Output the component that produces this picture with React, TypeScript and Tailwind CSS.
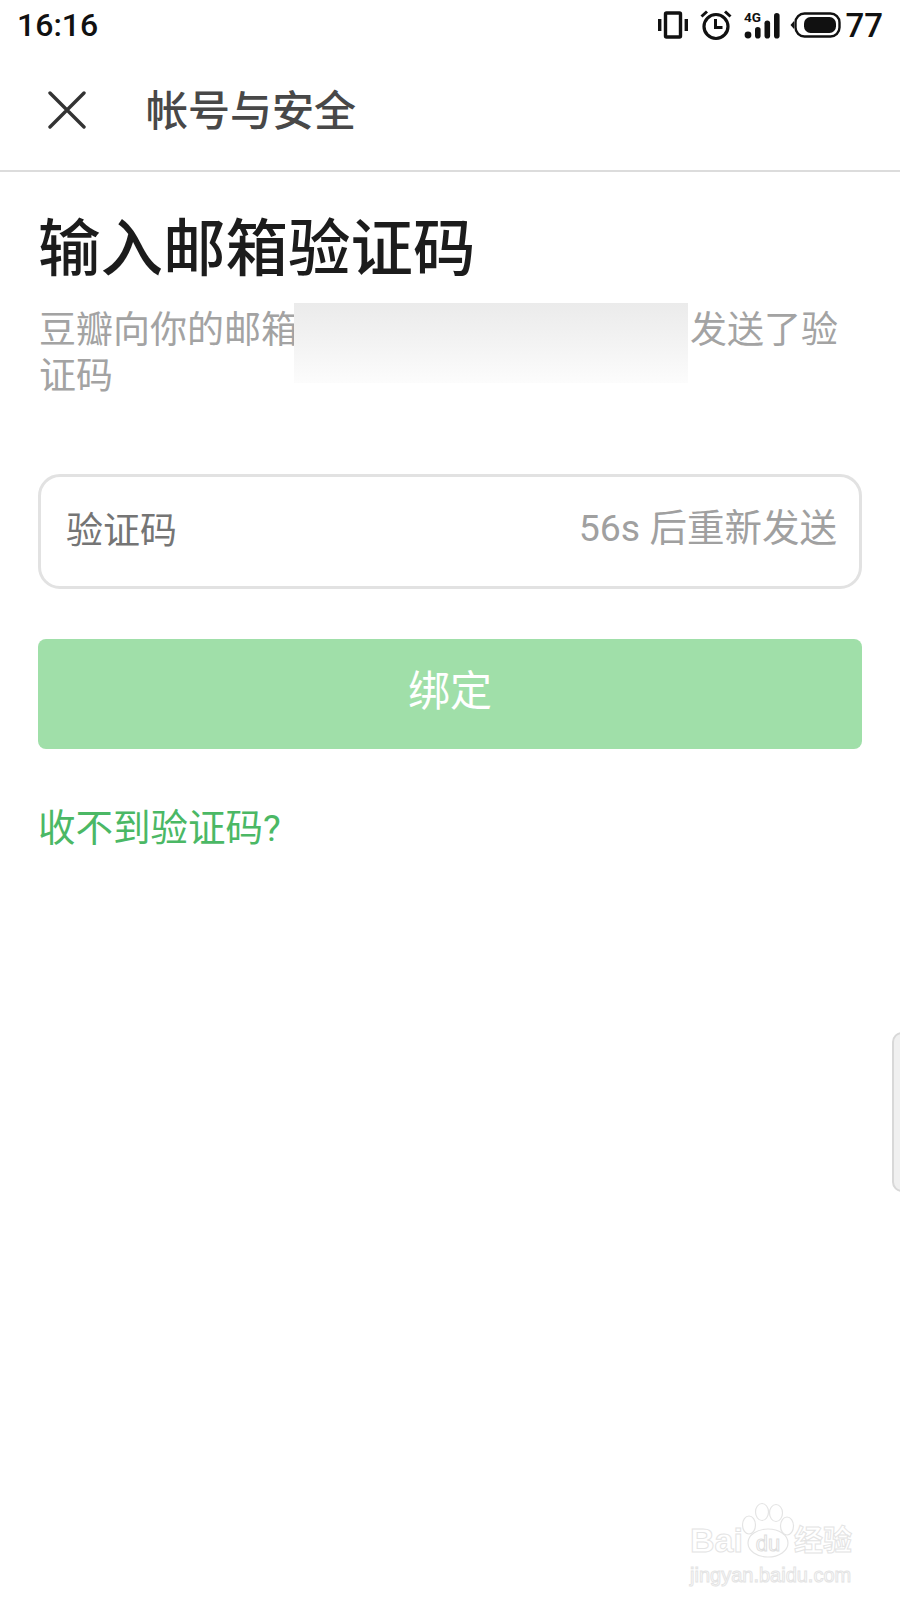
const cjk = "font-['Roboto','Noto_Sans_CJK_SC','Noto_Sans',sans-serif]";

function StatusIcons() {
  return (
    <div className="flex items-center">
      <svg width="32" height="30" viewBox="0 0 32 30" fill="none" className="text-[#111]">
        <rect x="8.5" y="3" width="15" height="24" stroke="currentColor" strokeWidth="3.4" rx="1" />
        <rect x="1" y="9" width="3.4" height="12" fill="currentColor" />
        <rect x="27.6" y="9" width="3.4" height="12" fill="currentColor" />
      </svg>
      <svg width="34" height="32" viewBox="0 0 34 32" fill="none" className="ml-[10px]">
        <circle cx="17" cy="17.5" r="12" stroke="#111" strokeWidth="3.2" />
        <path d="M16.5 10v8.5h7" stroke="#111" strokeWidth="3" />
        <path d="M2.5 7.5 8 2.5M31.5 7.5 26 2.5" stroke="#111" strokeWidth="3" />
      </svg>
      <svg width="38" height="30" viewBox="0 0 38 30" className="ml-[11px]">
        <text x="0" y="12" fontSize="13.5" fontWeight="700" fill="#111" fontFamily="Roboto, sans-serif">4G</text>
        <circle cx="4" cy="25" r="3.4" fill="#111" />
        <rect x="11" y="17" width="5.6" height="11.5" rx="2.8" fill="#111" />
        <rect x="20.5" y="10.5" width="5.6" height="18" rx="2.8" fill="#111" />
        <rect x="30" y="3" width="5.6" height="25.5" rx="2.8" fill="#111" />
      </svg>
      <svg width="52" height="26" viewBox="0 0 52 26" className="ml-[7px]" fill="none">
        <path d="M5 9 1.5 13 5 17Z" fill="#111" />
        <rect x="6.5" y="1.5" width="44" height="23" rx="9" stroke="#111" strokeWidth="2.4" />
        <rect x="15" y="5" width="32" height="16" rx="6.5" fill="#111" />
      </svg>
      <span className="ml-[4px] text-[33px] leading-none font-medium text-[#111] font-['Roboto',sans-serif]">77</span>
    </div>
  );
}

function Watermark() {
  const outline = "text-white [-webkit-text-stroke:1px_#e4e4e4]";
  return (
    <div className="absolute left-[690px] top-[1502px] flex w-[170px] flex-col select-none">
      <div className="flex items-end">
        <span className={`text-[34px] leading-[40px] font-bold font-['Liberation_Sans',sans-serif] ${outline}`}>Bai</span>
        <svg width="54" height="58" viewBox="0 0 54 58" fill="none" className="ml-[-2px]">
          <ellipse cx="27" cy="41" rx="20" ry="14" fill="white" stroke="#e4e4e4" strokeWidth="1.2" />
          <ellipse cx="8" cy="23" rx="6.5" ry="9" stroke="#e4e4e4" strokeWidth="1.2" />
          <ellipse cx="21" cy="10" rx="6.5" ry="8.5" stroke="#e4e4e4" strokeWidth="1.2" />
          <ellipse cx="35" cy="11" rx="6.5" ry="8.5" stroke="#e4e4e4" strokeWidth="1.2" />
          <ellipse cx="46" cy="24" rx="6.5" ry="9" stroke="#e4e4e4" strokeWidth="1.2" />
          <text x="27" y="49" textAnchor="middle" fontSize="22" fontFamily="Liberation Sans, sans-serif" fill="white" stroke="#dedede" strokeWidth="1">du</text>
        </svg>
        <span className={`ml-[-1px] text-[29px] leading-[38px] font-bold ${cjk} ${outline}`}>经验</span>
      </div>
      <span className={`mt-[3px] text-[20px] leading-[24px] font-['Liberation_Sans',sans-serif] ${outline}`}>jingyan.baidu.com</span>
    </div>
  );
}

export default function App() {
  return (
    <div className={`relative h-[1600px] w-[900px] overflow-hidden bg-white ${cjk}`}>
      {/* status bar */}
      <div className="flex h-[50px] items-center justify-between px-[17px]">
        <span className="text-[32px] leading-none font-medium text-[#111]">16:16</span>
        <StatusIcons />
      </div>

      {/* header */}
      <div className="flex h-[122px] items-center gap-[60px] border-b-2 border-[#dcdcdc] pl-[48px]">
        <svg width="38" height="38" viewBox="0 0 38 38" fill="none">
          <path d="M2 2 36 36M36 2 2 36" stroke="#333" strokeWidth="3.4" strokeLinecap="round" />
        </svg>
        <span className="pt-[4px] text-[42px] leading-none font-medium text-[#484848]">帐号与安全</span>
      </div>

      {/* body */}
      <div className="flex flex-col px-[38px] pt-[40px]">
        <h1 className="text-[62.5px] leading-[76px] font-medium text-[#1c1c1c]">输入邮箱验证码</h1>

        <p className="relative mt-[20px] ml-[1px] w-[820px] text-[37px] leading-[46px] text-[#a3a3a3]">
          豆瓣向你的邮箱
          <span className="inline-block w-[392px]" />
          发送了验证码
          <span className="absolute left-[255px] top-[-5px] h-[80px] w-[394px] bg-gradient-to-b from-[#ebebeb] via-[#f3f3f3] to-[#fcfcfc]" />
        </p>

        <div className="mt-[74px] flex h-[115px] w-[824px] items-center justify-between rounded-[22px] border-[3px] border-[#e2e2e2] pl-[25px] pr-[22px]">
          <span className="text-[37px] leading-none text-[#757575]">验证码</span>
          <span className="pb-[5px] text-[37.5px] leading-none text-[#a0a0a0]">56s 后重新发送</span>
        </div>

        <div className="mt-[50px] flex h-[110px] w-[824px] items-center justify-center rounded-[8px] bg-[#a0dfa9] pb-[5px] text-[42px] leading-none text-white">
          绑定
        </div>

        <div className="mt-[57px] text-[37.5px] leading-[44px] text-[#4bb865]">收不到验证码?</div>
      </div>

      {/* edge handle */}
      <div className="absolute right-[-8px] top-[1032px] h-[160px] w-[16px] rounded-l-[10px] border-2 border-[#d8d8d8] bg-[#f0f0f0]" />

      <Watermark />
    </div>
  );
}
